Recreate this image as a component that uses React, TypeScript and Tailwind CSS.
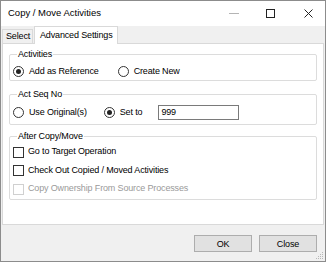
import React from 'react';

const font = { fontFamily: '"Liberation Sans", Arial, sans-serif' };

function Radio({ checked, label, className }: { checked?: boolean; label: string; className?: string }) {
  return (
    <div className={`flex items-center ${className ?? ''}`}>
      <span className="flex h-[11px] w-[11px] items-center justify-center rounded-full border border-[#333] bg-white">
        {checked && <span className="h-[5px] w-[5px] rounded-full bg-[#222]" />}
      </span>
      <span className="ml-[5px]">{label}</span>
    </div>
  );
}

function Check({ label, disabled }: { label: string; disabled?: boolean }) {
  return (
    <div className="flex h-[18.5px] items-center">
      <span className={`h-[11px] w-[11px] border bg-white ${disabled ? 'border-[#d0d0d0]' : 'border-[#333]'}`} />
      <span className={`ml-[4px] ${disabled ? 'text-[#9a9a9a]' : ''}`}>{label}</span>
    </div>
  );
}

function Group({ title, children, className }: { title: string; children: React.ReactNode; className?: string }) {
  return (
    <fieldset className={`mx-[6px] rounded-[2px] border border-[#dcdcdc] pl-[3px] pr-[4px] ${className ?? ''}`}>
      <legend className="ml-[4px] px-[1px] leading-[13px]">{title}</legend>
      {children}
    </fieldset>
  );
}

export default function App() {
  return (
    <div className="h-[263px] w-[327px] bg-white text-[9px] tracking-[-0.15px] text-black" style={font}>
      <div className="flex h-[262px] w-[326px] flex-col border border-[#8c8c8c] bg-[#f0f0f0]">
        {/* title bar */}
        <div className="flex h-[25px] items-center bg-white">
          <span className="ml-[7px] text-[9.5px] tracking-normal">Copy / Move Activities</span>
          <div className="ml-auto flex h-full items-center">
            <span className="mr-[27px] block h-[1px] w-[10px] bg-[#b4b4b4]" />
            <span className="mr-[29px] block h-[9px] w-[9px] border border-[#222]" />
            <svg width="9" height="9" viewBox="0 0 9 9" className="mr-[12px]">
              <path d="M0.5 0.5 L8.5 8.5 M8.5 0.5 L0.5 8.5" stroke="#222" strokeWidth="1" />
            </svg>
          </div>
        </div>

        {/* tabs */}
        <div className="flex h-[17px] items-end pl-[1px]">
          <div className="h-[14px] w-[31px] border border-b-0 border-[#d9d9d9] bg-[#f0f0f0] pl-[3px] leading-[13px]">Select</div>
          <div className="relative z-10 -mb-[1px] ml-[1px] h-[18px] w-[84px] border border-b-0 border-[#d9d9d9] bg-white pl-[5px] pt-[1px] leading-[14px]">
            Advanced Settings
          </div>
        </div>

        {/* tab panel */}
        <div className="mx-[1px] flex h-[183px] flex-col border border-[#d9d9d9] bg-white pt-[4px]">
          <Group title="Activities" className="h-[33px]">
            <div className="flex h-[16px] items-center pt-[6px]">
              <Radio checked label="Add as Reference" />
              <Radio label="Create New" className="ml-[19px]" />
            </div>
          </Group>

          <Group title="Act Seq No" className="mt-[7px] h-[37px]">
            <div className="flex h-[18px] items-center pt-[6px]">
              <Radio label="Use Original(s)" />
              <Radio checked label="Set to" className="ml-[17px]" />
              <div className="ml-[16px] h-[15px] w-[81px] border border-[#7a7a7a] bg-white pl-[2px] leading-[13px]">999</div>
            </div>
          </Group>

          <Group title="After Copy/Move" className="mt-[5px] h-[70px]">
            <div className="flex flex-col">
              <Check label="Go to Target Operation" />
              <Check label="Check Out Copied / Moved Activities" />
              <Check label="Copy Ownership From Source Processes" disabled />
            </div>
          </Group>
        </div>

        {/* buttons */}
        <div className="flex justify-end gap-[7px] pr-[8px] pt-[10px]">
          <button className="h-[17px] w-[58px] border border-[#adadad] bg-[#e1e1e1] leading-[14px]">OK</button>
          <button className="h-[17px] w-[58px] border border-[#adadad] bg-[#e1e1e1] leading-[14px]">Close</button>
        </div>
        <div className="mt-auto flex justify-end pb-[1px] pr-[1px]">
          <svg width="8" height="8" viewBox="0 0 8 8">
            <rect x="6" y="0" width="1" height="1" fill="#b8b8b8" />
            <rect x="4" y="2" width="1" height="1" fill="#b8b8b8" />
            <rect x="6" y="2" width="1" height="1" fill="#b8b8b8" />
            <rect x="2" y="4" width="1" height="1" fill="#b8b8b8" />
            <rect x="4" y="4" width="1" height="1" fill="#b8b8b8" />
            <rect x="6" y="4" width="1" height="1" fill="#b8b8b8" />
            <rect x="0" y="6" width="1" height="1" fill="#b8b8b8" />
            <rect x="2" y="6" width="1" height="1" fill="#b8b8b8" />
            <rect x="4" y="6" width="1" height="1" fill="#b8b8b8" />
            <rect x="6" y="6" width="1" height="1" fill="#b8b8b8" />
          </svg>
        </div>
      </div>
    </div>
  );
}
